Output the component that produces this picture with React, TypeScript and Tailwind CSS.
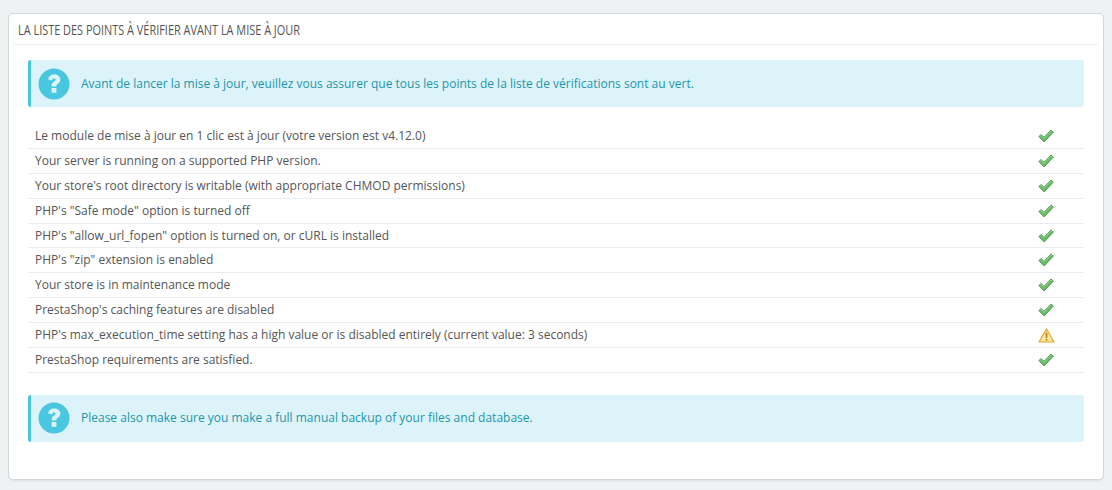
const rows: [string, boolean][] = [
  ["Le module de mise à jour en 1 clic est à jour (votre version est v4.12.0)", true],
  ["Your server is running on a supported PHP version.", true],
  ["Your store's root directory is writable (with appropriate CHMOD permissions)", true],
  ["PHP's \"Safe mode\" option is turned off", true],
  ["PHP's \"allow_url_fopen\" option is turned on, or cURL is installed", true],
  ["PHP's \"zip\" extension is enabled", true],
  ["Your store is in maintenance mode", true],
  ["PrestaShop's caching features are disabled", true],
  ["PHP's max_execution_time setting has a high value or is disabled entirely (current value: 3 seconds)", false],
  ["PrestaShop requirements are satisfied.", true],
];

function Check() {
  return (
    <svg width="16" height="14" viewBox="0 0 16 14" className="block">
      <path d="M0.8 7.6 L3 5.6 L6 8.2 L13 1 L15.4 3 L6.2 13 Z" fill="#6dbb6a" stroke="#3f8f3f" strokeWidth="0.8" strokeLinejoin="round" />
      <path d="M1.8 7.5 L3 6.5 L6 9.2 L13 2 L14 2.8" fill="none" stroke="#9ad69a" strokeWidth="0.8" />
    </svg>
  );
}

function Warn() {
  return (
    <svg width="17" height="15" viewBox="0 0 17 15" className="block">
      <path d="M8.5 1 L16 14 L1 14 Z" fill="#fde9a0" stroke="#eda02e" strokeWidth="1.2" strokeLinejoin="round" />
      <path d="M8.5 4.5 V9.8" stroke="#b9822a" strokeWidth="1.8" />
      <path d="M8.5 10.8 V12.6" stroke="#b9822a" strokeWidth="1.8" />
    </svg>
  );
}

function Alert({ text }: { text: string }) {
  return (
    <div className="flex h-[47px] items-center rounded-[3px] border-l-[3px] border-[#4ac7e0] bg-[#dcf4f9] pl-[7px]">
      <svg width="32" height="32" viewBox="0 0 32 32" className="shrink-0">
        <circle cx="16" cy="16" r="15.5" fill="#4ac7e0" />
        <path d="M10.2 11.6 C10.6 8 13 6.4 16.2 6.4 C19.6 6.4 22.4 8.4 22.4 11.6 C22.4 14 21 15 19.4 16 C18.4 16.7 18.4 17.2 18.4 18.4 H13.6 C13.6 16 14 15 15.6 13.9 C16.8 13.1 17.6 12.7 17.6 11.8 C17.6 10.9 16.9 10.4 16 10.4 C15 10.4 14.4 11 14.2 12.4 Z" fill="#dcf4f9" />
        <rect x="13.6" y="20" width="4.8" height="4.8" fill="#dcf4f9" />
      </svg>
      <p className="ml-[11px] text-[12px] text-[#1e94ab]">{text}</p>
    </div>
  );
}

export default function App() {
  return (
    <div className="h-[490px] overflow-hidden bg-[#eff1f2] px-[8px] pt-[13px] font-['Open_Sans',sans-serif] text-[12px] text-[#555]">
      <div className="h-[467px] w-[1096px] rounded-[5px] border border-[#d3d8db] bg-white px-[19px] shadow-[0_2px_0_rgba(0,0,0,0.04)]">
        <div className="-mx-[15px] flex h-[31px] items-center border-b border-[#eeeeee] px-[5px]">
          <h2 className="origin-left scale-x-[0.78] whitespace-nowrap text-[14px] font-['Open_Sans',sans-serif] text-[#555]">
            LA LISTE DES POINTS À VÉRIFIER AVANT LA MISE À JOUR
          </h2>
        </div>
        <div className="pt-[15px]">
          <Alert text="Avant de lancer la mise à jour, veuillez vous assurer que tous les points de la liste de vérifications sont au vert." />
        </div>
        <div className="mt-[17px]">
          {rows.map(([label, ok]) => (
            <div key={label} className="flex h-[24.9px] items-center border-b border-[#eaedef] pl-[7px]">
              <span className="flex-1">{label}</span>
              <span className="flex w-[46px] justify-start">{ok ? <Check /> : <Warn />}</span>
              <span className="w-[0px]" />
            </div>
          ))}
        </div>
        <div className="mt-[22px]">
          <Alert text="Please also make sure you make a full manual backup of your files and database." />
        </div>
      </div>
    </div>
  );
}
